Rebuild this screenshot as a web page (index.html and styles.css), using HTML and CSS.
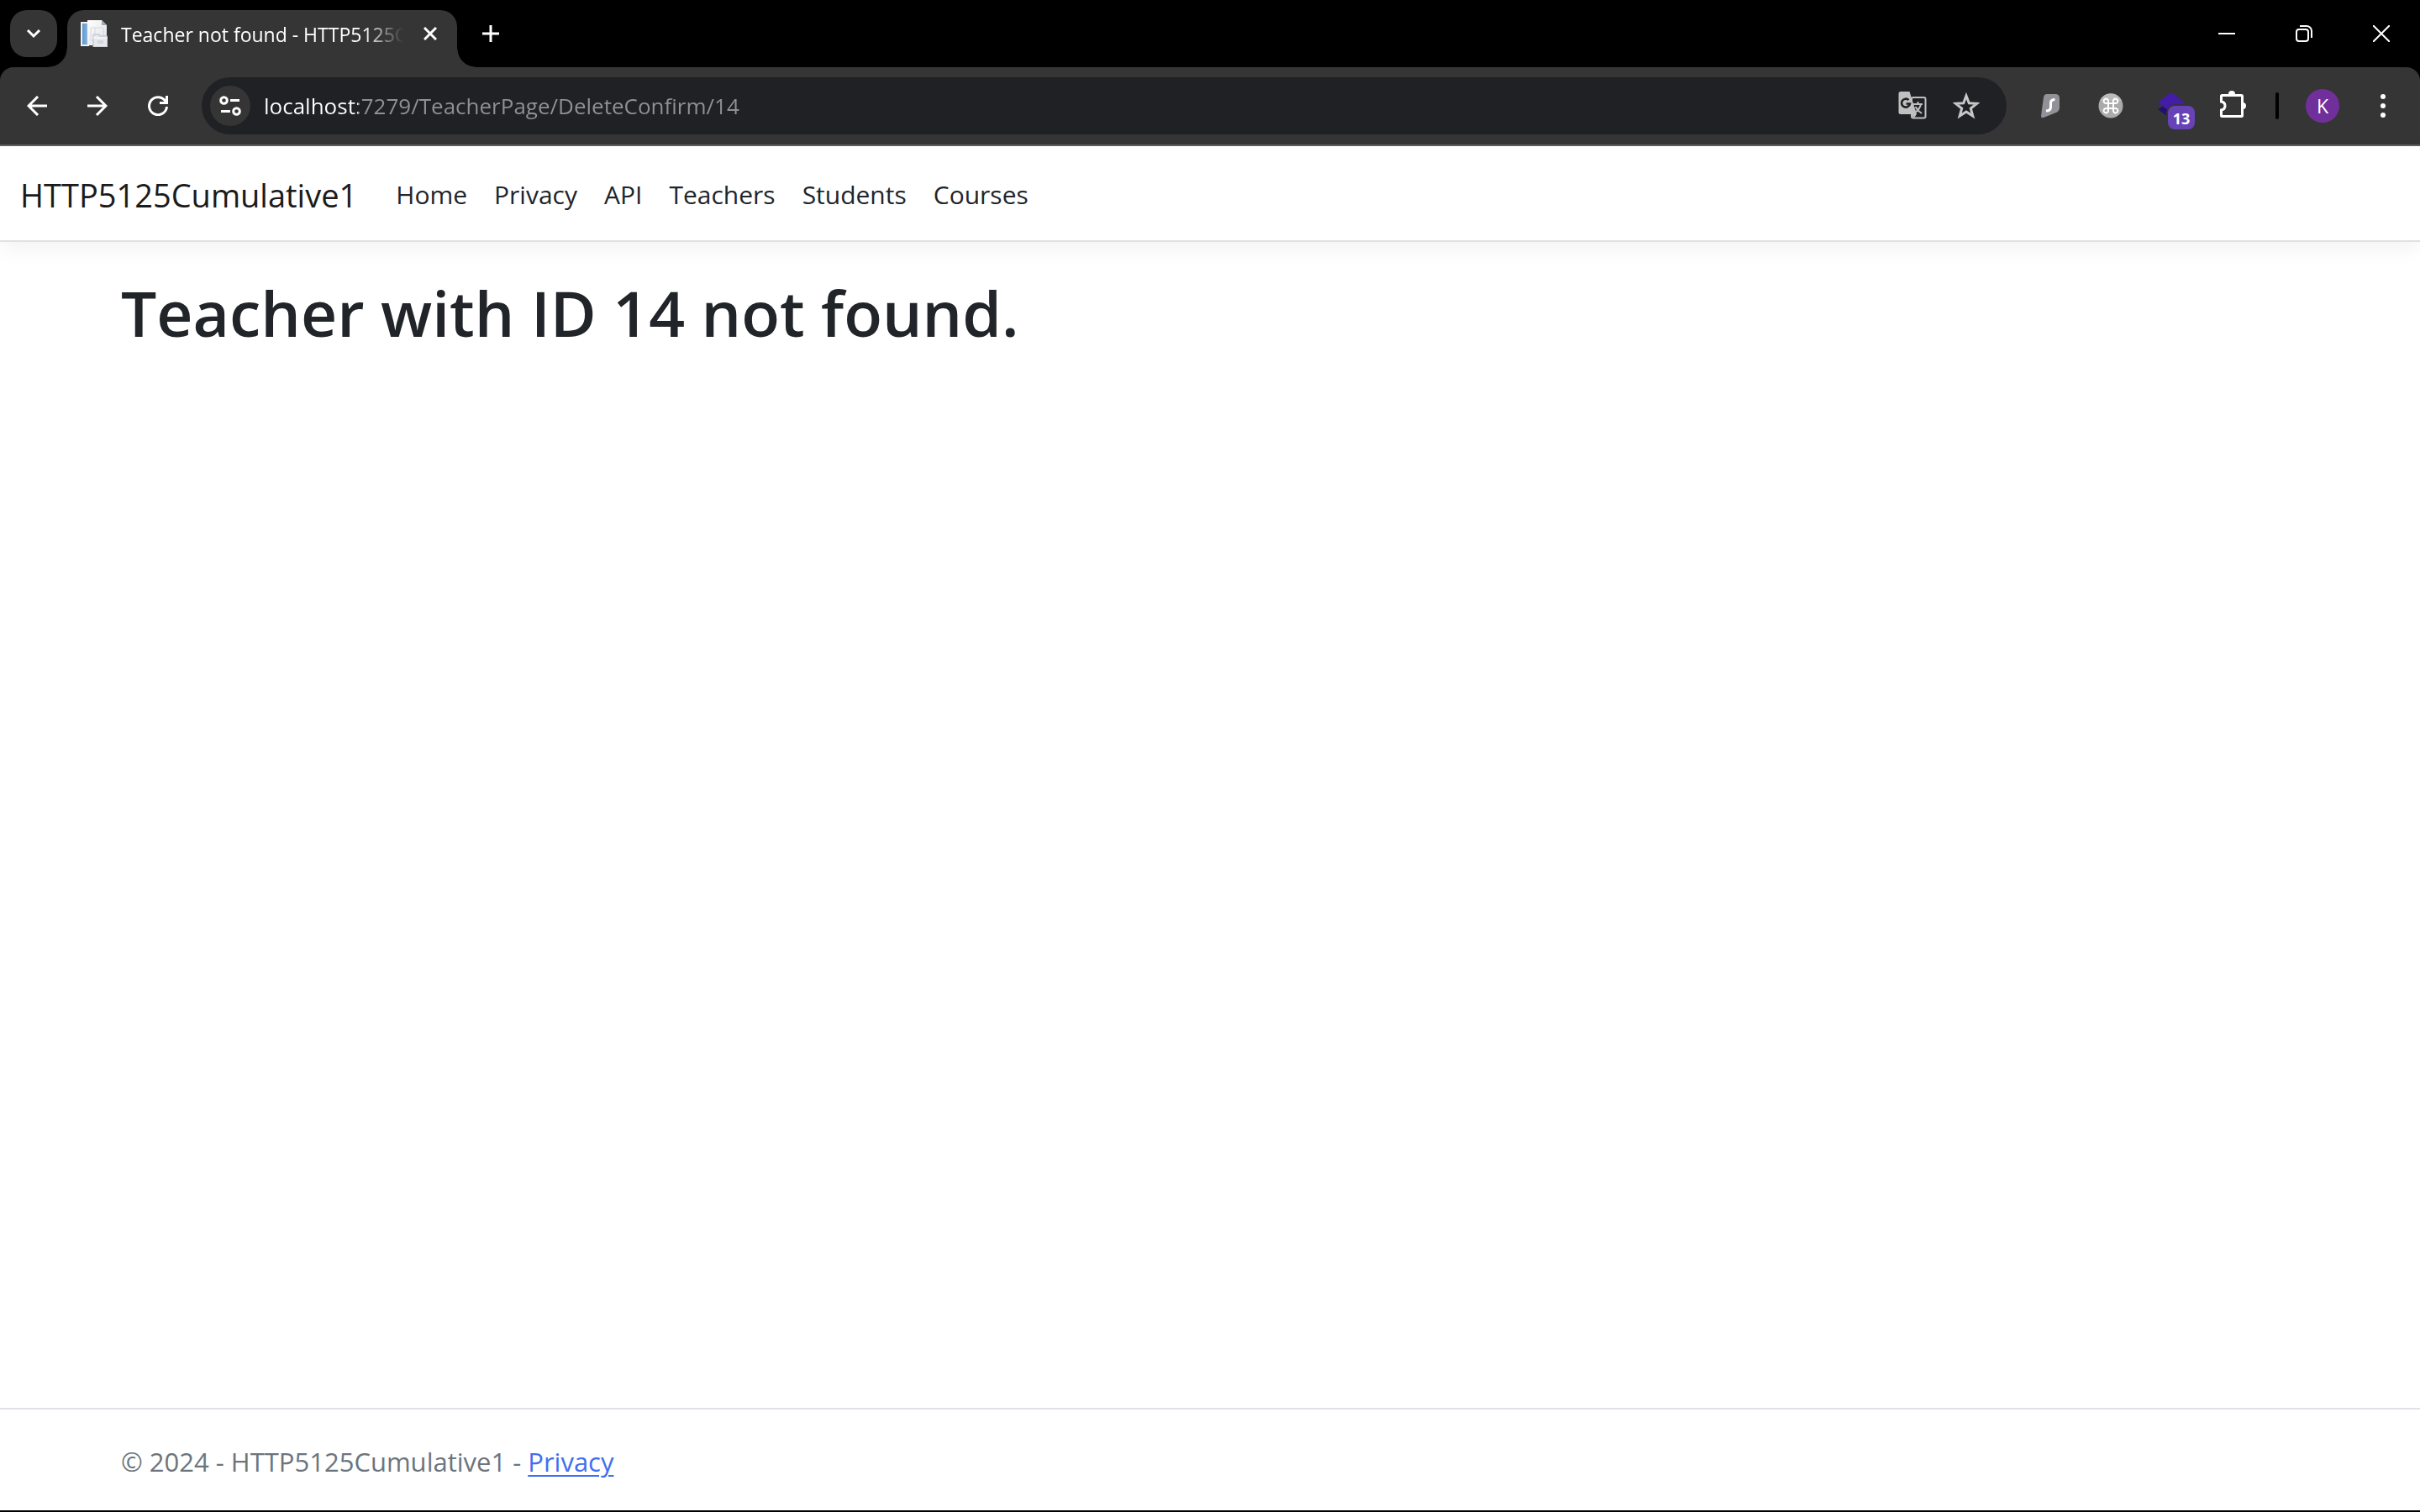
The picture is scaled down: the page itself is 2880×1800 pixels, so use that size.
FILE: index.html
```html
<!DOCTYPE html>
<html lang="en">
<head>
<meta charset="utf-8">
<meta name="viewport" content="width=device-width, initial-scale=1">
<title>Teacher not found - HTTP5125Cumulative1</title>
<link rel="stylesheet" href="styles.css">
</head>
<body>
<div class="browser">
  <div class="tabstrip">
    <button class="tab-search" type="button" aria-label="Search tabs">
      <svg width="20" height="20" viewBox="0 0 20 20"><path d="M3 6l7 7 7-7" fill="none" stroke="#fff" stroke-width="3"/></svg>
    </button>
    <div class="tab">
      <svg class="favicon" width="32" height="32" viewBox="0 0 32 32">
        <defs>
          <linearGradient id="blue" x2="1"><stop stop-color="#5d97cf"/><stop offset="1" stop-color="#86b4de"/></linearGradient>
          <linearGradient id="paper" x2="1" y2="1"><stop stop-color="#fff"/><stop offset="1" stop-color="#dde0e6"/></linearGradient>
        </defs>
        <path d="M0 2h10v29H0z" fill="#eef2f7"/>
        <path d="M2 4h6v25H2z" fill="url(#blue)"/>
        <path d="M8 0h17l6 6v24H8z" fill="url(#paper)"/>
        <path d="M25 0v6h6z" fill="#a4a8b0"/>
        <path d="M12 9h15v15H12zM17 9v15" fill="none" stroke="#d5d8de"/>
        <path d="M15 17h7l1 2h9v13H15z" fill="#e6e8ec" stroke="#b9bcc3"/>
        <path d="M15 21h17" stroke="#fff"/>
        <path d="M20 24h7v4h-7z" fill="#d3d6db"/>
      </svg>
      <span class="tab-title">Teacher not found - HTTP5125Cumulative1</span>
      <button class="tab-close" type="button" aria-label="Close tab">
        <svg width="16" height="16" viewBox="0 0 16 16"><path d="M1 1l14 14M15 1L1 15" stroke="#fff" stroke-width="3"/></svg>
      </button>
    </div>
    <button class="new-tab" type="button" aria-label="New tab">
      <svg width="20" height="20" viewBox="0 0 20 20"><path d="M0 10h20M10 0v20" stroke="#fff" stroke-width="3"/></svg>
    </button>
    <div class="window-controls">
      <button type="button" aria-label="Minimize"><svg width="20" height="20" viewBox="0 0 20 20"><path d="M0 10h20" stroke="#fff" stroke-width="2"/></svg></button>
      <button type="button" aria-label="Restore"><svg width="20" height="20" viewBox="0 0 20 20" fill="none" stroke="#fff" stroke-width="2"><rect x="1" y="5" width="14" height="14" rx="3"/><path d="M5 1h8a6 6 0 0 1 6 6v8"/></svg></button>
      <button type="button" aria-label="Close"><svg width="20" height="20" viewBox="0 0 20 20"><path d="M0 0l20 20M20 0L0 20" stroke="#fff" stroke-width="2"/></svg></button>
    </div>
  </div>

  <div class="toolbar">
    <div class="toolbar-group">
      <button class="tool" type="button" aria-label="Back"><svg width="24" height="24" viewBox="0 0 24 24" fill="none" stroke="#fff" stroke-width="3"><path d="M24 12H2M13 1L2 12l11 11"/></svg></button>
      <button class="tool" type="button" aria-label="Forward"><svg width="24" height="24" viewBox="0 0 24 24" fill="none" stroke="#fff" stroke-width="3"><path d="M0 12h22M11 1l11 11-11 11"/></svg></button>
      <button class="tool" type="button" aria-label="Reload"><svg width="24" height="24" viewBox="0 0 24 24" fill="none" stroke="#fff" stroke-width="3"><path d="M22.500 13A10.500 10.500 0 1 1 20 5.300L22 8.500M22.500 0v8.500H14"/></svg></button>
    </div>
    <div class="omnibox">
      <button class="site-info" type="button" aria-label="View site information">
        <svg width="26" height="24" viewBox="0 0 26 24" fill="none" stroke="#fff" stroke-width="3"><circle cx="5.500" cy="5.500" r="3.800"/><path d="M13 5.500h11M2 18.500h11"/><circle cx="20.500" cy="18.500" r="3.800"/></svg>
      </button>
      <input class="url" type="text" aria-label="Address and search bar" value="localhost:7279/TeacherPage/DeleteConfirm/14">
      <button class="omni-action" type="button" aria-label="Translate this page">
        <svg width="34" height="34" viewBox="0 0 34 34" fill="none">
          <rect x="16" y="7" width="16.500" height="24.500" rx="2" stroke="#c0c0c0" stroke-width="2"/>
          <path d="M3 0h10.500l8.500 27H3a2.500 2.500 0 0 1-2.500-2.500v-22A2.500 2.500 0 0 1 3 0z" fill="#c0c0c0"/>
          <path d="M16 27h6l-3.500 5z" fill="#c0c0c0"/>
          <path d="M12.500 10A5 5 0 1 0 14 14.500H9.500" stroke="#202124" stroke-width="2.600"/>
          <path d="M18 15h11M23.500 12v3M27 15c-1 5-4 8-7 10M20.500 18c1.500 3 4 6 7.500 8" stroke="#c0c0c0" stroke-width="2"/>
        </svg>
      </button>
      <button class="omni-action" type="button" aria-label="Bookmark this tab">
        <svg width="32" height="32" viewBox="0 0 32 32"><path d="M16 4l3.300 8.700 9.200.6-7.200 5.800 2.500 9L16 23l-7.800 5.100 2.500-9-7.200-5.800 9.200-.6z" fill="none" stroke="#c7c7c7" stroke-width="3"/></svg>
      </button>
    </div>
    <div class="toolbar-group">
      <button class="tool" type="button" aria-label="Surfshark">
        <svg width="24" height="30" viewBox="0 0 24 30"><path d="M8 1h10q5 0 5 5v11q0 4-4 6L4 29q-3 1-3-2L4 5q.5-4 4-4z" fill="#919197"/><path d="M17.500 7.500c-4 0-5 1.500-5 4v5c0 3-1.500 4.500-5.500 4.500" fill="none" stroke="#fff" stroke-width="3"/></svg>
      </button>
      <button class="tool" type="button" aria-label="Shortcuts">
        <svg width="30" height="30" viewBox="0 0 30 30"><circle cx="15" cy="15" r="14.500" fill="#aaa"/><path d="M2 9a14 14 0 0 1 26 0z" fill="#bbb"/><path d="M12 12h6v6h-6zM12 12H9.500A2.700 2.700 0 1 1 12 9.500zM18 12V9.500A2.700 2.700 0 1 1 20.500 12zM18 18h2.500A2.700 2.700 0 1 1 18 20.500zM12 18v2.500A2.700 2.700 0 1 1 9.500 18z" fill="none" stroke="#fff" stroke-width="2"/></svg>
      </button>
      <button class="tool tool-badged" type="button" aria-label="Layers, 13 items">
        <svg width="32" height="32" viewBox="0 0 32 32"><path d="M0 20l16-9 16 9-16 12z" fill="#21106f"/><path d="M0 12L16 0l16 12-16 12z" fill="#431daa"/></svg>
        <span class="badge">13</span>
      </button>
      <button class="tool" type="button" aria-label="Extensions">
        <svg width="36" height="36" viewBox="0 0 36 36"><path d="M6.500 5.500h23q1 0 1 1v23q0 1-1 1h-23q-1 0-1-1v-6.500c6-1 6-9 0-10V6.500q0-1 1-1z" fill="none" stroke="#fff" stroke-width="3"/><path d="M14 4a4 4 0 0 1 8 0zM31 14a4 4 0 0 1 0 8z" fill="#fff"/></svg>
      </button>
      <span class="separator"></span>
      <button class="tool" type="button" aria-label="Profile"><span class="avatar">K</span></button>
      <button class="tool" type="button" aria-label="Menu">
        <svg width="8" height="28" viewBox="0 0 8 28" fill="#fff"><circle cx="4" cy="3" r="3"/><circle cx="4" cy="14" r="3"/><circle cx="4" cy="25" r="3"/></svg>
      </button>
    </div>
  </div>
</div>

<header class="site-header">
  <nav class="navbar">
    <a class="brand" href="#">HTTP5125Cumulative1</a>
    <ul class="nav-list">
      <li><a class="nav-link" href="#">Home</a></li>
      <li><a class="nav-link" href="#">Privacy</a></li>
      <li><a class="nav-link" href="#">API</a></li>
      <li><a class="nav-link" href="#">Teachers</a></li>
      <li><a class="nav-link" href="#">Students</a></li>
      <li><a class="nav-link" href="#">Courses</a></li>
    </ul>
  </nav>
</header>

<main class="container content">
  <h1>Teacher with ID 14 not found.</h1>
</main>

<footer class="site-footer">
  <div class="container">© 2024 - HTTP5125Cumulative1 - <a href="#">Privacy</a></div>
</footer>
</body>
</html>
```
FILE: styles.css
```css
* {
  box-sizing: border-box;
}

body {
  margin: 0;
  min-height: 100vh;
  display: flex;
  flex-direction: column;
  background: #fff;
  border-bottom: 2px solid #000;
  color: #212529;
  font-family: "Open Sans", "Noto Sans", sans-serif;
  font-size: 30px;
}

button {
  display: flex;
  align-items: center;
  justify-content: center;
  padding: 0;
  border: 0;
  background: none;
  font: inherit;
}

svg {
  display: block;
  flex: none;
}

/* Browser frame */

.browser {
  background: #000;
}

.tabstrip {
  display: flex;
  align-items: center;
  height: 80px;
  padding-left: 12px;
}

.tab-search {
  width: 56px;
  height: 56px;
  margin-right: 12px;
  border-radius: 20px;
  background: #353535;
}

.tab {
  position: relative;
  display: flex;
  align-items: center;
  align-self: flex-end;
  width: 464px;
  height: 68px;
  padding: 0 0 12px 16px;
  border-radius: 20px 20px 0 0;
  background: #353535;
}

.tab::before,
.tab::after {
  content: "";
  position: absolute;
  bottom: 0;
  width: 22px;
  height: 22px;
}

.tab::before {
  right: 100%;
  background: radial-gradient(circle at 0 0, transparent 21px, #353535 22px);
}

.tab::after {
  left: 100%;
  background: radial-gradient(circle at 100% 0, transparent 21px, #353535 22px);
}

.tab-title {
  flex: 1;
  min-width: 0;
  margin-left: 16px;
  padding-top: 2px;
  overflow: hidden;
  white-space: nowrap;
  color: #fff;
  font-size: 23px;
  line-height: 32px;
  -webkit-mask-image: linear-gradient(to left, transparent, #000 48px);
  mask-image: linear-gradient(to left, transparent, #000 48px);
}

.tab-close {
  width: 64px;
  height: 32px;
}

.new-tab {
  width: 56px;
  height: 56px;
  margin-left: 12px;
}

.window-controls {
  display: flex;
  margin-left: auto;
}

.window-controls button {
  width: 92px;
  height: 80px;
}

.toolbar {
  display: flex;
  align-items: center;
  gap: 16px;
  height: 94px;
  padding: 0 8px;
  border-bottom: 2px solid #5f5f5f;
  border-radius: 16px 16px 0 0;
  background: #353535;
}

.toolbar-group {
  display: flex;
  align-items: center;
}

.tool {
  width: 72px;
  height: 68px;
}

.omnibox {
  flex: 1;
  display: flex;
  align-items: center;
  height: 68px;
  padding: 0 16px 0 10px;
  border-radius: 34px;
  background: #202124;
}

.site-info {
  width: 48px;
  height: 48px;
  border-radius: 50%;
  background: #353535;
}

.url {
  flex: 1;
  min-width: 0;
  height: 48px;
  margin-left: 16px;
  padding: 0;
  border: 0;
  outline: 0;
  background: linear-gradient(to right, #fff 112px, #8f9194 112px);
  -webkit-background-clip: text;
  background-clip: text;
  color: transparent;
  font-family: inherit;
  font-size: 26px;
}

.omni-action {
  width: 64px;
  height: 64px;
}

.tool-badged {
  position: relative;
}

.badge {
  position: absolute;
  top: 34px;
  left: 32px;
  width: 32px;
  height: 28px;
  border-radius: 8px;
  box-shadow: 0 0 0 2px #353535;
  background: #6743b7;
  color: #fff;
  font-size: 18px;
  font-weight: 700;
  line-height: 30px;
}

.separator {
  width: 4px;
  height: 32px;
  margin: 0 16px;
  border-radius: 2px;
  background: #000;
}

.avatar {
  width: 40px;
  height: 40px;
  border-radius: 50%;
  background: #712f9c;
  color: #fff;
  font-size: 23px;
  line-height: 40px;
}

/* Site */

.site-header {
  border-bottom: 2px solid #dee2e6;
  box-shadow: 0 8px 24px rgba(0, 0, 0, .05);
}

.navbar {
  display: flex;
  align-items: center;
  padding: 18px 24px 14px;
}

.brand {
  margin-right: 30px;
  color: #1b1b1b;
  font-size: 38px;
  line-height: 60px;
  text-decoration: none;
}

.nav-list {
  display: flex;
  margin: 0;
  padding: 0;
  list-style: none;
}

.nav-link {
  display: block;
  padding: 16px;
  color: #212529;
  line-height: 48px;
  text-decoration: none;
}

.container {
  width: 100%;
  max-width: 2640px;
  margin: 0 auto;
  padding: 0 24px;
}

.content {
  flex: 1;
  padding-top: 36px;
}

h1 {
  margin: 0;
  font-size: 75px;
  font-weight: 600;
  line-height: 96px;
}

.site-footer {
  border-top: 2px solid #dee2e6;
  color: #6c757d;
  font-size: 31px;
  line-height: 124px;
}

.site-footer .container {
  height: 120px;
}

.site-footer a {
  color: #3f6ff0;
  text-decoration-thickness: 2px;
  text-underline-offset: 4px;
}
```
